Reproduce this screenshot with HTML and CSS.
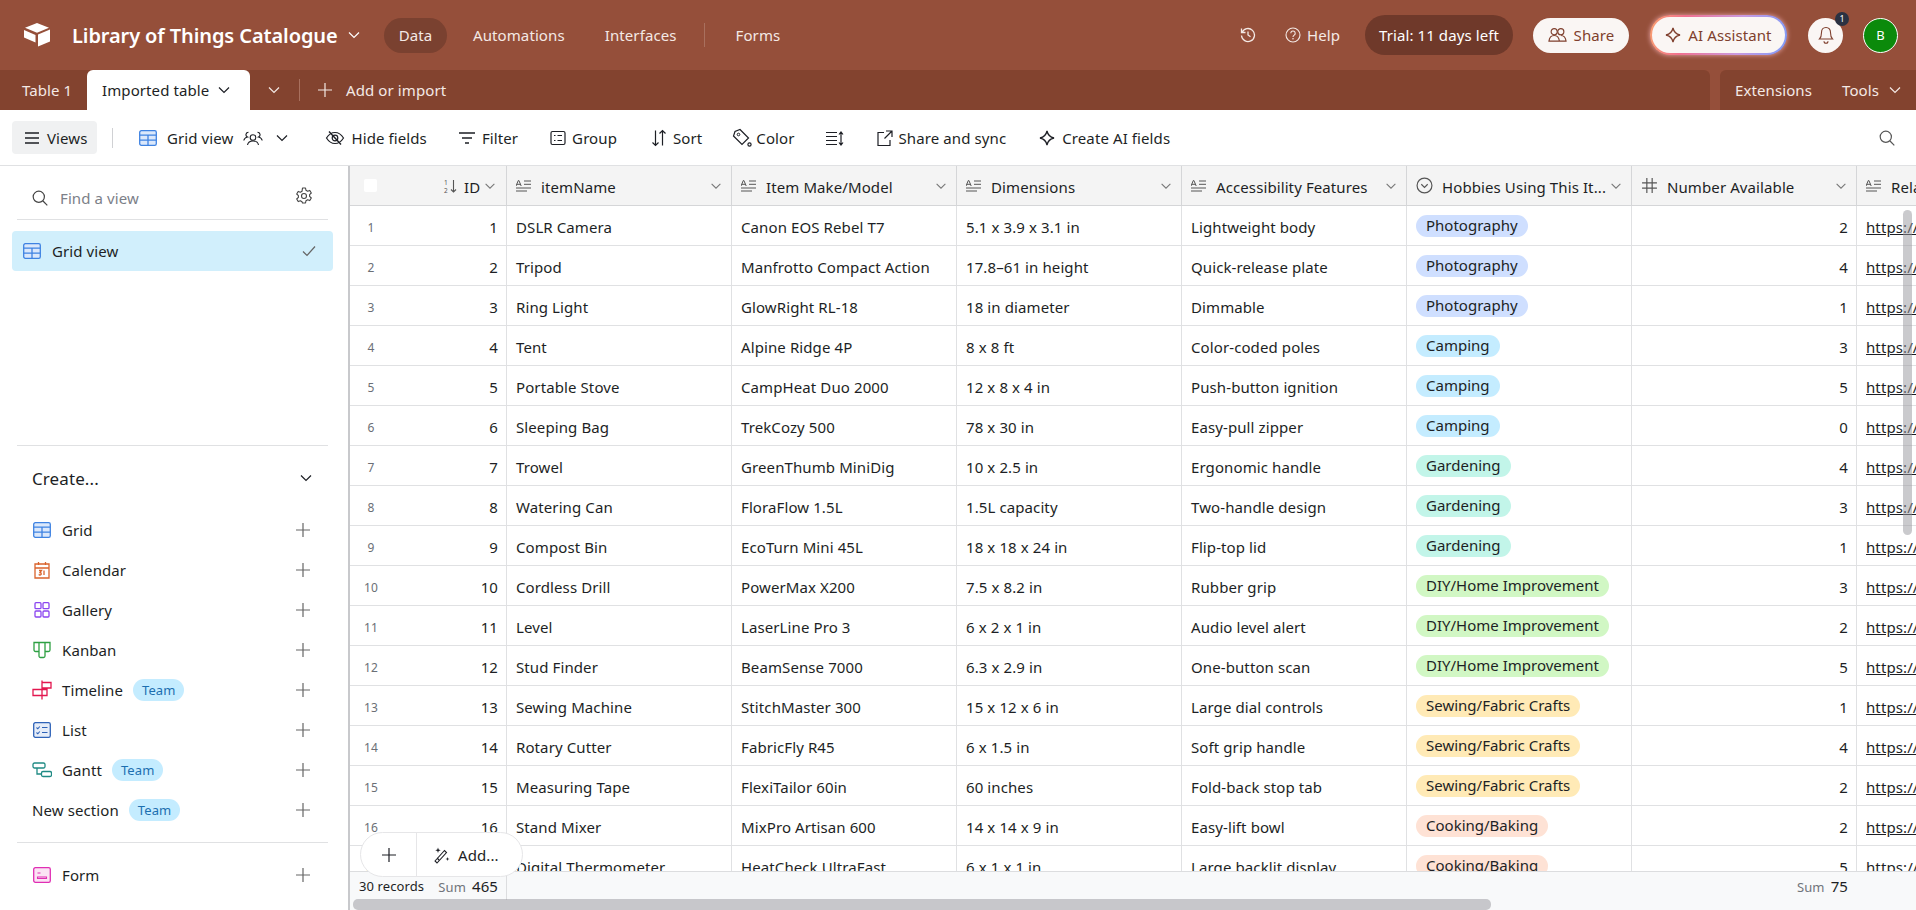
FILE: index.html
```html
<!DOCTYPE html>
<html lang="en">
<head>
  <meta charset="UTF-8">
  <title>Library of Things Catalogue</title>
  <link rel="stylesheet" href="styles.css">
</head>
<body>
  <svg class="sprite" xmlns="http://www.w3.org/2000/svg">
    <symbol id="chev" viewBox="0 0 16 16"><path d="M3 5.500l5 5 5-5" fill="none" stroke="currentColor" stroke-width="1.200"/></symbol>
    <symbol id="plus" viewBox="0 0 16 16"><path d="M8 1v14M1 8h14" fill="none" stroke="currentColor" stroke-width="1.200"/></symbol>
    <symbol id="grid" viewBox="0 0 18 16"><rect x=".7" y=".7" width="16.600" height="14.600" rx="1.600" fill="#dbe8fb" stroke="#3f83e2" stroke-width="1.300"/><path d="M.7 5.200h16.600M.7 10.200h16.600M9 5.200v10" stroke="#3f83e2" stroke-width="1.300" fill="none"/></symbol>
    <symbol id="text" viewBox="0 0 16 12"><path d="M0 6L2.300 .5h.6L5.200 6M.8 4.300h3.600M8 1h7M8 4.300h7M0 8h15M0 11h11" fill="none" stroke="currentColor" stroke-width="1"/></symbol>
    <symbol id="spark" viewBox="0 0 16 16"><path d="M8 1c.8 3.800 2.500 6 7 7-4.500 1-6.200 3.200-7 7-.8-3.800-2.500-6-7-7 4.500-1 6.200-3.200 7-7z" fill="none" stroke="currentColor" stroke-width="1.300"/></symbol>
    <symbol id="people" viewBox="0 0 20 16"><circle cx="6.500" cy="4.500" r="3.200" fill="none" stroke="currentColor" stroke-width="1.200"/><circle cx="13.500" cy="4.500" r="3.200" fill="none" stroke="currentColor" stroke-width="1.200"/><path d="M1 14.500c.4-3.500 2.300-6 5.500-6s5.100 2.500 5.500 6zM8 14.500h11c-.4-3.500-2.300-6-5.500-6" fill="none" stroke="currentColor" stroke-width="1.200"/></symbol>
    <symbol id="search" viewBox="0 0 16 16"><circle cx="6.800" cy="6.800" r="5.600" fill="none" stroke="currentColor" stroke-width="1.200"/><path d="M11 11l4.300 4.300" stroke="currentColor" stroke-width="1.200"/></symbol>
  </svg>

  <div class="app">
    <header class="topbar">
      <svg class="logo" viewBox="0 0 28 24"><path d="M14 0l12 4.800-12 4.900L2 4.800z" fill="#fff"/><path d="M15 11.500l12-5v12l-12 5z" fill="#fff"/><path d="M1 7l11.500 5v7.500L1 14.500z" fill="#fff"/></svg>
      <div class="base-name">Library of Things Catalogue</div>
      <svg class="ico chev-top"><use href="#chev"/></svg>
      <nav class="top-nav">
        <a class="nav-item active">Data</a>
        <a class="nav-item">Automations</a>
        <a class="nav-item">Interfaces</a>
        <span class="nav-sep"></span>
        <a class="nav-item">Forms</a>
      </nav>
      <div class="top-right">
        <svg class="ico history" viewBox="0 0 16 16"><path d="M1.500 1.500v4h4M2 5.500a6.500 6.500 0 1 1-.5 3M8 4.500V8l2.500 1.800" fill="none" stroke="currentColor" stroke-width="1.300"/></svg>
        <div class="help">
          <svg class="ico" viewBox="0 0 16 16"><circle cx="8" cy="8" r="7" fill="none" stroke="currentColor" stroke-width="1.100"/><path d="M5.800 6.200a2.200 2.200 0 1 1 3.400 1.900c-.8.500-1.200.9-1.200 1.800" fill="none" stroke="currentColor" stroke-width="1.100"/><circle cx="8" cy="11.800" r=".8" fill="currentColor"/></svg>
          <span>Help</span>
        </div>
        <div class="trial">Trial: 11 days left</div>
        <div class="share-btn"><svg class="ico"><use href="#people"/></svg>Share</div>
        <div class="ai-wrap"><div class="ai-btn"><svg class="ico"><use href="#spark"/></svg>AI Assistant</div></div>
        <div class="bell">
          <svg class="ico" viewBox="0 0 16 18"><path d="M8 1.500c-3 0-4.500 2.200-4.500 5 0 3.500-.5 5-2 6.500h13c-1.500-1.500-2-3-2-6.500 0-2.800-1.500-5-4.500-5zM6 15.200a2 2 0 0 0 4 0" fill="none" stroke="currentColor" stroke-width="1.100"/></svg>
          <span class="badge">1</span>
        </div>
        <div class="avatar">B</div>
      </div>
    </header>

    <div class="tabbar">
      <div class="tabs-left">
        <div class="tab first">Table 1</div>
        <div class="tab current">Imported table<svg class="ico"><use href="#chev"/></svg></div>
        <svg class="ico tabs-more"><use href="#chev"/></svg>
        <span class="tabs-sep"></span>
        <svg class="ico tabs-plus"><use href="#plus"/></svg>
        <div class="tab add">Add or import</div>
      </div>
      <div class="tabs-right">
        <div class="tab">Extensions</div>
        <div class="tab tools">Tools<svg class="ico"><use href="#chev"/></svg></div>
      </div>
    </div>

    <div class="toolbar">
      <div class="views-btn">
        <svg class="ico" viewBox="0 0 16 16"><path d="M1 3h14M1 8h14M1 13h14" stroke="currentColor" stroke-width="1.300"/></svg>Views
      </div>
      <span class="tool-sep"></span>
      <div class="tool grid-view">
        <svg class="ico grid-ico"><use href="#grid"/></svg>Grid view
        <svg class="ico people-ico" viewBox="0 0 20 15"><circle cx="10" cy="6.500" r="2.800" fill="none" stroke="currentColor" stroke-width="1.100"/><path d="M4.500 14c.5-2.600 2.500-4 5.500-4s5 1.400 5.500 4M5.500 1.200a2.500 2.500 0 0 0-1 4.800C2.500 6.500 1.200 7.700.8 9.500M14.500 1.200a2.500 2.500 0 0 1 1 4.800c2 .5 3.300 1.700 3.700 3.500" fill="none" stroke="currentColor" stroke-width="1.100"/></svg>
        <svg class="ico chev-ico"><use href="#chev"/></svg>
      </div>
      <div class="tool hide"><svg class="ico" viewBox="0 0 20 16"><path d="M1.500 8C4 4 6.500 2.500 10 2.500S16 4 18.500 8C16 12 13.500 13.500 10 13.500S4 12 1.500 8z" fill="none" stroke="currentColor" stroke-width="1.200"/><circle cx="10" cy="8" r="2.800" fill="none" stroke="currentColor" stroke-width="1.200"/><path d="M4 1.500l12 13" stroke="currentColor" stroke-width="1.400"/></svg>Hide fields</div>
      <div class="tool filter"><svg class="ico" viewBox="0 0 18 14"><path d="M1 2h16M4 7h10M7 12h4" stroke="currentColor" stroke-width="1.400"/></svg>Filter</div>
      <div class="tool group"><svg class="ico" viewBox="0 0 16 16"><rect x="1" y="1.500" width="14" height="13" rx="1.500" fill="none" stroke="currentColor" stroke-width="1.200"/><path d="M4 5.500h1.500M4 10.500h1.500M7.500 5.500H12M7.500 10.500H12" stroke="currentColor" stroke-width="1.200"/></svg>Group</div>
      <div class="tool sort"><svg class="ico" viewBox="0 0 16 18"><path d="M4.500 1.500v15M1.500 13.500l3 3 3-3M11.500 16.500v-15M8.500 4.500l3-3 3 3" fill="none" stroke="currentColor" stroke-width="1.200"/></svg>Sort</div>
      <div class="tool color"><svg class="ico" viewBox="0 0 20 20"><path d="M8 1.500l8.500 8.500-6.500 6.500L1.500 8 3 3.500z" fill="none" stroke="currentColor" stroke-width="1.200"/><circle cx="6.500" cy="6.500" r="1.300" fill="none" stroke="currentColor"/><circle cx="17.500" cy="16.500" r="1.600" fill="none" stroke="currentColor" stroke-width="1.200"/></svg>Color</div>
      <div class="tool rowh"><svg class="ico" viewBox="0 0 18 15"><path d="M0 1.500h11M0 5.500h11M0 9.500h11M0 13.500h11M15 1v13M13 3.500L15 1l2 2.500M13 11.500L15 14l2-2.500" fill="none" stroke="currentColor" stroke-width="1.200"/></svg></div>
      <div class="tool sharesync"><svg class="ico" viewBox="0 0 16 16"><path d="M7 2.500H1v13h12V10M9 1h6v6M15 1L7.500 8.500" fill="none" stroke="currentColor" stroke-width="1.200"/></svg>Share and sync</div>
      <div class="tool createai"><svg class="ico"><use href="#spark"/></svg>Create AI fields</div>
      <svg class="ico tool-search"><use href="#search"/></svg>
    </div>

    <div class="main">
      <aside class="sidebar">
        <div class="side-top">
          <div class="find">
            <svg class="ico"><use href="#search"/></svg>
            <span class="find-text">Find a view</span>
            <svg class="ico gear" viewBox="0 0 18 18"><path d="M7.500 1h3l.5 2.300 1.600.9 2.200-.8 1.500 2.600-1.700 1.600v1.800l1.700 1.600-1.500 2.600-2.200-.8-1.600.9-.5 2.300h-3L7 14.700l-1.600-.9-2.200.8-1.500-2.600 1.700-1.600V8.600L1.700 7l1.500-2.600 2.200.8L7 4.300z" fill="none" stroke="currentColor" stroke-width="1.100" stroke-linejoin="round"/><circle cx="9" cy="9" r="2.500" fill="none" stroke="currentColor" stroke-width="1.100"/></svg>
          </div>
          <div class="view-row">
            <svg class="ico grid-ico"><use href="#grid"/></svg>
            <span>Grid view</span>
            <svg class="ico check" viewBox="0 0 14 12"><path d="M1 6.500l4 4L13 1.500" fill="none" stroke="currentColor" stroke-width="1.200"/></svg>
          </div>
        </div>
        <div class="side-bottom">
          <div class="create-head"><span>Create...</span><svg class="ico"><use href="#chev"/></svg></div>
          <div class="create-item"><svg class="ico cr-ico"><use href="#grid"/></svg><span>Grid</span><svg class="ico add-ico"><use href="#plus"/></svg></div>
          <div class="create-item"><svg class="ico cr-ico" viewBox="0 0 18 18"><path d="M2 3h14v14H2zM2 7h14M5.500 1v3M12.500 1v3" fill="none" stroke="#d9632c" stroke-width="1.300"/><path d="M6 9.500h2.500L7 11.500c1.500 0 1.800 2.500 0 2.500-.7 0-1-.3-1.200-.6M11 9.500V14" fill="none" stroke="#d9632c" stroke-width="1.300"/></svg><span>Calendar</span><svg class="ico add-ico"><use href="#plus"/></svg></div>
          <div class="create-item"><svg class="ico cr-ico" viewBox="0 0 18 18"><rect x="2" y="1.700" width="6" height="6" rx="1" fill="none" stroke="#8b46f0" stroke-width="1.300"/><rect x="10" y="1.700" width="6" height="6" rx="1" fill="none" stroke="#8b46f0" stroke-width="1.300"/><rect x="2" y="10" width="6" height="6" rx="1" fill="none" stroke="#8b46f0" stroke-width="1.300"/><rect x="10" y="10" width="6" height="6" rx="1" fill="none" stroke="#8b46f0" stroke-width="1.300"/></svg><span>Gallery</span><svg class="ico add-ico"><use href="#plus"/></svg></div>
          <div class="create-item"><svg class="ico cr-ico" viewBox="0 0 18 18"><path d="M1 1.500h16V9a1.500 1.500 0 0 1-1.500 1.500H12V15a1.500 1.500 0 0 1-1.500 1.500h-3A1.500 1.500 0 0 1 6 15v-4.500H2.500A1.500 1.500 0 0 1 1 9zM6 1.500v9M12 1.500v9" fill="none" stroke="#2ea043" stroke-width="1.300"/></svg><span>Kanban</span><svg class="ico add-ico"><use href="#plus"/></svg></div>
          <div class="create-item"><svg class="ico cr-ico wide" viewBox="0 0 20 20"><path d="M10 .5v19M10 2.500h9v5.500h-9M1 9.500h14v6H1z" fill="none" stroke="#e3174f" stroke-width="1.300"/></svg><span>Timeline</span><span class="team">Team</span><svg class="ico add-ico"><use href="#plus"/></svg></div>
          <div class="create-item"><svg class="ico cr-ico" viewBox="0 0 18 16"><rect x=".7" y=".7" width="16.600" height="14.600" rx="1.600" fill="#e6edf8" stroke="#2f63b8" stroke-width="1.300"/><path d="M3.500 5.500l1.300 1.300 2-2.300M3.500 10.500l1.300 1.300 2-2.300M9 5.500h5.500M9 10.500h5.500" fill="none" stroke="#2f63b8" stroke-width="1.100"/></svg><span>List</span><svg class="ico add-ico"><use href="#plus"/></svg></div>
          <div class="create-item"><svg class="ico cr-ico wide" viewBox="0 0 20 16"><rect x="1" y="1" width="12" height="5" rx="1.500" fill="none" stroke="#1f8a84" stroke-width="1.300"/><rect x="9.500" y="9.500" width="10" height="5" rx="1.500" fill="none" stroke="#1f8a84" stroke-width="1.300"/><path d="M5 6v6h4.500" fill="none" stroke="#1f8a84" stroke-width="1.300"/></svg><span>Gantt</span><span class="team">Team</span><svg class="ico add-ico"><use href="#plus"/></svg></div>
          <div class="create-item section"><span>New section</span><span class="team">Team</span><svg class="ico add-ico"><use href="#plus"/></svg></div>
          <div class="create-item form"><svg class="ico cr-ico" viewBox="0 0 18 16"><rect x=".7" y=".7" width="16.600" height="14.600" rx="1.600" fill="#fbe3f4" stroke="#e02fb4" stroke-width="1.300"/><path d="M4.500 6h3M4.500 10h9v1.500h-9z" fill="none" stroke="#e02fb4" stroke-width="1.100"/></svg><span>Form</span><svg class="ico add-ico"><use href="#plus"/></svg></div>
        </div>
      </aside>

      <section class="grid-area">
        <div class="grid-head row">
          <div class="cell gutter">
            <span class="checkbox"></span>
            <svg class="ico sort-ico" viewBox="0 0 16 16"><path d="M11.500 2v12M9 11.500l2.500 2.500 2.500-2.500" fill="none" stroke="currentColor" stroke-width="1.100"/><text x="2" y="7" font-size="6.500" fill="currentColor" font-family="Noto Sans">1</text><text x="2" y="14.500" font-size="6.500" fill="currentColor" font-family="Noto Sans">2</text></svg>
            <span class="id-label">ID</span>
            <svg class="ico hchev"><use href="#chev"/></svg>
          </div>
          <div class="cell"><svg class="ico f-ico"><use href="#text"/></svg><span class="h-name">itemName</span><svg class="ico hchev"><use href="#chev"/></svg></div>
          <div class="cell"><svg class="ico f-ico"><use href="#text"/></svg><span class="h-name">Item Make/Model</span><svg class="ico hchev"><use href="#chev"/></svg></div>
          <div class="cell"><svg class="ico f-ico"><use href="#text"/></svg><span class="h-name">Dimensions</span><svg class="ico hchev"><use href="#chev"/></svg></div>
          <div class="cell"><svg class="ico f-ico"><use href="#text"/></svg><span class="h-name">Accessibility Features</span><svg class="ico hchev"><use href="#chev"/></svg></div>
          <div class="cell"><svg class="ico f-ico big" viewBox="0 0 16 16"><circle cx="8" cy="8" r="7" fill="none" stroke="currentColor" stroke-width="1.100"/><path d="M5 6.800l3 3 3-3" fill="none" stroke="currentColor" stroke-width="1.100"/></svg><span class="h-name">Hobbies Using This It...</span><svg class="ico hchev"><use href="#chev"/></svg></div>
          <div class="cell"><svg class="ico f-ico big" viewBox="0 0 16 16"><path d="M5.500 1v14M10.500 1v14M1 5.500h14M1 10.500h14" fill="none" stroke="currentColor" stroke-width="1.100"/></svg><span class="h-name">Number Available</span><svg class="ico hchev"><use href="#chev"/></svg></div>
          <div class="cell"><svg class="ico f-ico"><use href="#text"/></svg><span class="h-name">Related Link</span></div>
        </div>

        <div class="rows">
          <div class="row"><div class="cell gutter"><span class="num">1</span><span class="id">1</span></div><div class="cell">DSLR Camera</div><div class="cell">Canon EOS Rebel T7</div><div class="cell">5.1 x 3.9 x 3.1 in</div><div class="cell">Lightweight body</div><div class="cell"><span class="pill photo">Photography</span></div><div class="cell right">2</div><div class="cell link">https://example.com</div></div>
          <div class="row"><div class="cell gutter"><span class="num">2</span><span class="id">2</span></div><div class="cell">Tripod</div><div class="cell">Manfrotto Compact Action</div><div class="cell">17.8–61 in height</div><div class="cell">Quick-release plate</div><div class="cell"><span class="pill photo">Photography</span></div><div class="cell right">4</div><div class="cell link">https://example.com</div></div>
          <div class="row"><div class="cell gutter"><span class="num">3</span><span class="id">3</span></div><div class="cell">Ring Light</div><div class="cell">GlowRight RL-18</div><div class="cell">18 in diameter</div><div class="cell">Dimmable</div><div class="cell"><span class="pill photo">Photography</span></div><div class="cell right">1</div><div class="cell link">https://example.com</div></div>
          <div class="row"><div class="cell gutter"><span class="num">4</span><span class="id">4</span></div><div class="cell">Tent</div><div class="cell">Alpine Ridge 4P</div><div class="cell">8 x 8 ft</div><div class="cell">Color-coded poles</div><div class="cell"><span class="pill camp">Camping</span></div><div class="cell right">3</div><div class="cell link">https://example.com</div></div>
          <div class="row"><div class="cell gutter"><span class="num">5</span><span class="id">5</span></div><div class="cell">Portable Stove</div><div class="cell">CampHeat Duo 2000</div><div class="cell">12 x 8 x 4 in</div><div class="cell">Push-button ignition</div><div class="cell"><span class="pill camp">Camping</span></div><div class="cell right">5</div><div class="cell link">https://example.com</div></div>
          <div class="row"><div class="cell gutter"><span class="num">6</span><span class="id">6</span></div><div class="cell">Sleeping Bag</div><div class="cell">TrekCozy 500</div><div class="cell">78 x 30 in</div><div class="cell">Easy-pull zipper</div><div class="cell"><span class="pill camp">Camping</span></div><div class="cell right">0</div><div class="cell link">https://example.com</div></div>
          <div class="row"><div class="cell gutter"><span class="num">7</span><span class="id">7</span></div><div class="cell">Trowel</div><div class="cell">GreenThumb MiniDig</div><div class="cell">10 x 2.5 in</div><div class="cell">Ergonomic handle</div><div class="cell"><span class="pill garden">Gardening</span></div><div class="cell right">4</div><div class="cell link">https://example.com</div></div>
          <div class="row"><div class="cell gutter"><span class="num">8</span><span class="id">8</span></div><div class="cell">Watering Can</div><div class="cell">FloraFlow 1.5L</div><div class="cell">1.5L capacity</div><div class="cell">Two-handle design</div><div class="cell"><span class="pill garden">Gardening</span></div><div class="cell right">3</div><div class="cell link">https://example.com</div></div>
          <div class="row"><div class="cell gutter"><span class="num">9</span><span class="id">9</span></div><div class="cell">Compost Bin</div><div class="cell">EcoTurn Mini 45L</div><div class="cell">18 x 18 x 24 in</div><div class="cell">Flip-top lid</div><div class="cell"><span class="pill garden">Gardening</span></div><div class="cell right">1</div><div class="cell link">https://example.com</div></div>
          <div class="row"><div class="cell gutter"><span class="num">10</span><span class="id">10</span></div><div class="cell">Cordless Drill</div><div class="cell">PowerMax X200</div><div class="cell">7.5 x 8.2 in</div><div class="cell">Rubber grip</div><div class="cell"><span class="pill diy">DIY/Home Improvement</span></div><div class="cell right">3</div><div class="cell link">https://example.com</div></div>
          <div class="row"><div class="cell gutter"><span class="num">11</span><span class="id">11</span></div><div class="cell">Level</div><div class="cell">LaserLine Pro 3</div><div class="cell">6 x 2 x 1 in</div><div class="cell">Audio level alert</div><div class="cell"><span class="pill diy">DIY/Home Improvement</span></div><div class="cell right">2</div><div class="cell link">https://example.com</div></div>
          <div class="row"><div class="cell gutter"><span class="num">12</span><span class="id">12</span></div><div class="cell">Stud Finder</div><div class="cell">BeamSense 7000</div><div class="cell">6.3 x 2.9 in</div><div class="cell">One-button scan</div><div class="cell"><span class="pill diy">DIY/Home Improvement</span></div><div class="cell right">5</div><div class="cell link">https://example.com</div></div>
          <div class="row"><div class="cell gutter"><span class="num">13</span><span class="id">13</span></div><div class="cell">Sewing Machine</div><div class="cell">StitchMaster 300</div><div class="cell">15 x 12 x 6 in</div><div class="cell">Large dial controls</div><div class="cell"><span class="pill sew">Sewing/Fabric Crafts</span></div><div class="cell right">1</div><div class="cell link">https://example.com</div></div>
          <div class="row"><div class="cell gutter"><span class="num">14</span><span class="id">14</span></div><div class="cell">Rotary Cutter</div><div class="cell">FabricFly R45</div><div class="cell">6 x 1.5 in</div><div class="cell">Soft grip handle</div><div class="cell"><span class="pill sew">Sewing/Fabric Crafts</span></div><div class="cell right">4</div><div class="cell link">https://example.com</div></div>
          <div class="row"><div class="cell gutter"><span class="num">15</span><span class="id">15</span></div><div class="cell">Measuring Tape</div><div class="cell">FlexiTailor 60in</div><div class="cell">60 inches</div><div class="cell">Fold-back stop tab</div><div class="cell"><span class="pill sew">Sewing/Fabric Crafts</span></div><div class="cell right">2</div><div class="cell link">https://example.com</div></div>
          <div class="row"><div class="cell gutter"><span class="num">16</span><span class="id">16</span></div><div class="cell">Stand Mixer</div><div class="cell">MixPro Artisan 600</div><div class="cell">14 x 14 x 9 in</div><div class="cell">Easy-lift bowl</div><div class="cell"><span class="pill cook">Cooking/Baking</span></div><div class="cell right">2</div><div class="cell link">https://example.com</div></div>
          <div class="row"><div class="cell gutter"><span class="num">17</span><span class="id">17</span></div><div class="cell">Digital Thermometer</div><div class="cell">HeatCheck UltraFast</div><div class="cell">6 x 1 x 1 in</div><div class="cell">Large backlit display</div><div class="cell"><span class="pill cook">Cooking/Baking</span></div><div class="cell right">5</div><div class="cell link">https://example.com</div></div>
        </div>

        <div class="grid-foot">
          <div class="foot-left"><span>30 records</span><span class="sum"><em>Sum</em> 465</span></div>
          <div class="foot-right"><span class="sum"><em>Sum</em> 75</span></div>
        </div>

        <div class="add-pill">
          <div class="add-plus"><svg class="ico"><use href="#plus"/></svg></div>
          <div class="add-more">
            <svg class="ico" viewBox="0 0 18 18"><path d="M3 15L12.500 4.500l2 2L5 17zM5 12l2 2" fill="none" stroke="currentColor" stroke-width="1.100"/><path d="M6 1.500l.7 2 2 .7-2 .7-.7 2-.7-2-2-.7 2-.7zM15.500 11l.5 1.500 1.500.5-1.500.5-.5 1.500-.5-1.500-1.500-.5 1.500-.5z" fill="currentColor"/></svg>
            Add...
          </div>
        </div>
        <div class="thumb-v"></div>
        <div class="thumb-h"></div>
      </section>
    </div>
  </div>
</body>
</html>
```

FILE: styles.css
```css
* {
  box-sizing: border-box;
}
html, body {
  margin: 0;
  height: 100%;
  overflow: hidden;
}
body {
  font-family: "Noto Sans", "Open Sans", sans-serif;
  font-size: 15px;
  letter-spacing: 0.1px;
  color: #1d1f25;
}
.sprite {
  display: none;
}
.ico {
  display: block;
  flex: none;
  width: 16px;
  height: 16px;
}
.app {
  display: flex;
  flex-direction: column;
  height: 910px;
}

/* top bar */
.topbar {
  display: flex;
  align-items: center;
  height: 70px;
  padding-left: 23px;
  background-color: #954f3a;
  color: #fff;
}
.logo {
  width: 28px;
  height: 24px;
  flex: none;
}
.base-name {
  margin-left: 21px;
  width: 266px;
  font-size: 20px;
  font-weight: 600;
  letter-spacing: -0.1px;
  white-space: nowrap;
}
.chev-top {
  margin-left: 8px;
}
.top-nav {
  display: flex;
  align-items: center;
  margin-left: 22px;
}
.nav-item {
  margin-left: 40px;
  color: #f4e9e5;
}
.nav-item.active {
  width: 63px;
  height: 35px;
  margin-left: 0;
  margin-right: -14px;
  line-height: 35px;
  text-align: center;
  border-radius: 18px;
  background-color: #7a4130;
}
.nav-sep {
  width: 1px;
  height: 24px;
  margin: 0 -9px 0 27px;
  background-color: #a9705e;
}
.top-right {
  display: flex;
  align-items: center;
  margin-left: auto;
  padding-right: 18px;
}
.history {
  margin-right: 29px;
  color: #f4e9e5;
}
.help {
  display: flex;
  align-items: center;
  gap: 6px;
  margin-right: 25px;
  color: #f4e9e5;
}
.trial {
  width: 148px;
  height: 40px;
  line-height: 40px;
  text-align: center;
  border-radius: 20px;
  background-color: #6f392a;
}
.share-btn {
  display: flex;
  align-items: center;
  justify-content: center;
  gap: 7px;
  width: 96px;
  height: 35px;
  margin-left: 20px;
  border-radius: 18px;
  background-color: #faf6f4;
  color: #7f3f2d;
}
.share-btn .ico {
  width: 19px;
}
.ai-wrap {
  margin-left: 21px;
  padding: 2px;
  width: 137px;
  height: 40px;
  border-radius: 20px;
  background: linear-gradient(100deg, #f9a070, #f0708f 25%, #c99ae0 65%, #7f9bf8);
  box-shadow: 0 0 5px rgba(255, 190, 200, 0.8);
}
.ai-btn {
  display: flex;
  align-items: center;
  justify-content: center;
  gap: 7px;
  height: 36px;
  border-radius: 18px;
  background-color: #faf6f4;
  color: #7f3f2d;
}
.bell {
  display: flex;
  align-items: center;
  justify-content: center;
  position: relative;
  width: 35px;
  height: 35px;
  margin-left: 21px;
  border-radius: 50%;
  background-color: #faf6f4;
  color: #7f3f2d;
}
.bell .ico {
  height: 18px;
}
.badge {
  position: absolute;
  top: -6px;
  right: -6px;
  width: 14px;
  height: 14px;
  border-radius: 50%;
  background-color: #2b3242;
  color: #fff;
  font-size: 9px;
  line-height: 14px;
  text-align: center;
}
.avatar {
  width: 35px;
  height: 35px;
  margin-left: 20px;
  border: 1px solid #fff;
  border-radius: 50%;
  background-color: #0b8a0b;
  color: #fff;
  font-size: 13px;
  line-height: 33px;
  text-align: center;
}

/* tab bar */
.tabbar {
  display: flex;
  gap: 10px;
  height: 40px;
  background-color: #954f3a;
}
.tabs-left, .tabs-right {
  display: flex;
  align-items: center;
  background-color: #83432f;
  color: #f4e9e5;
}
.tabs-left {
  flex: 1;
  padding-left: 22px;
  border-top-right-radius: 6px;
}
.tabs-right {
  width: 196px;
  padding-left: 15px;
  border-top-left-radius: 6px;
}
.tab {
  white-space: nowrap;
}
.tab.first {
  width: 49px;
}
.tab.current {
  display: flex;
  align-items: center;
  gap: 7px;
  width: 163px;
  height: 40px;
  margin-left: 16px;
  padding-left: 15px;
  border-radius: 6px 6px 0 0;
  background-color: #fff;
  color: #1d1f25;
}
.tabs-more {
  margin-left: 16px;
}
.tabs-sep {
  width: 1px;
  height: 22px;
  margin: 0 17px;
  background-color: #a9705e;
}
.tabs-plus {
  margin-right: 13px;
}
.tools {
  display: flex;
  align-items: center;
  gap: 8px;
  margin-left: 30px;
}

/* toolbar */
.toolbar {
  display: flex;
  align-items: center;
  height: 56px;
  padding-left: 12px;
  border-bottom: 1px solid #e0e1e3;
  background-color: #fff;
}
.views-btn {
  display: flex;
  align-items: center;
  gap: 7px;
  width: 85px;
  height: 33px;
  padding-left: 12px;
  border-radius: 4px;
  background-color: #f0f1f2;
}
.tool-sep {
  width: 1px;
  height: 20px;
  margin: 0 26px 0 15px;
  background-color: #d0d1d4;
}
.tool {
  display: flex;
  align-items: center;
  gap: 6px;
  padding-top: 1px;
  white-space: nowrap;
}
.grid-ico {
  width: 18px;
}
.grid-view .grid-ico {
  margin-right: 4px;
}
.people-ico {
  width: 20px;
  height: 15px;
  margin-left: 4px;
}
.chev-ico {
  margin-left: 5px;
}
.hide { margin-left: 35px; }
.hide .ico { width: 20px; height: 16px; }
.filter { margin-left: 31px; }
.filter .ico { width: 18px; height: 14px; }
.group { margin-left: 32px; }
.sort { margin-left: 34px; }
.sort .ico { height: 18px; }
.color { margin-left: 30px; gap: 4px; }
.color .ico { width: 20px; height: 20px; }
.rowh { margin-left: 31px; }
.rowh .ico { width: 18px; height: 15px; }
.sharesync { margin-left: 33px; }
.createai { margin-left: 33px; gap: 7px; }
.tool-search {
  margin-left: auto;
  margin-right: 21px;
  color: #555;
}

/* sidebar */
.main {
  display: flex;
  flex: 1;
  min-height: 0;
}
.sidebar {
  display: flex;
  flex-direction: column;
  justify-content: space-between;
  flex: none;
  width: 350px;
  padding: 0 15px 15px 12px;
  border-right: 2px solid #c8c9cc;
}
.find {
  display: flex;
  align-items: center;
  height: 54px;
  margin: 0 5px;
  padding: 11px 15px 0 15px;
  border-bottom: 1px solid #e0e1e3;
  color: #444;
}
.find-text {
  margin-left: 12px;
  color: #7c8088;
}
.gear {
  width: 18px;
  height: 18px;
  margin-left: auto;
  margin-bottom: 5px;
}
.view-row {
  display: flex;
  align-items: center;
  height: 40px;
  margin-top: 11px;
  padding: 0 17px 0 11px;
  border-radius: 4px;
  background-color: #d1effc;
}
.view-row span {
  margin-left: 11px;
}
.check {
  margin-left: auto;
  width: 14px;
  height: 12px;
  color: #666;
}
.side-bottom {
  margin: 0 5px;
  border-top: 1px solid #e0e1e3;
}
.create-head {
  display: flex;
  align-items: center;
  justify-content: space-between;
  height: 64px;
  padding: 0 14px 0 15px;
  font-size: 17px;
}
.create-item {
  display: flex;
  align-items: center;
  height: 40px;
  padding: 0 17px 0 16px;
}
.cr-ico {
  width: 18px;
  height: 18px;
  margin-right: 11px;
}
.cr-ico.wide {
  width: 20px;
  height: 20px;
  margin-left: -1px;
  margin-right: 10px;
}
.add-ico {
  margin-left: auto;
  color: #666;
}
.team {
  height: 22px;
  margin-left: 10px;
  padding: 0 9px;
  border-radius: 11px;
  background-color: #c4ecff;
  color: #1c6fb0;
  font-size: 13px;
  line-height: 22px;
}
.section {
  padding-left: 15px;
}
.form {
  margin-top: 25px;
  position: relative;
}
.form::before {
  content: "";
  position: absolute;
  top: -13px;
  left: 0;
  right: 0;
  height: 1px;
  background-color: #e0e1e3;
}

/* grid */
.grid-area {
  display: flex;
  flex-direction: column;
  flex: 1;
  min-width: 0;
  position: relative;
  overflow: hidden;
}
.row {
  display: grid;
  grid-template-columns: 157px repeat(7, 225px);
  height: 40px;
  border-bottom: 1px solid #e0e1e3;
}
.cell {
  display: flex;
  align-items: center;
  padding: 3px 8px 0 9px;
  overflow: hidden;
  white-space: nowrap;
  border-right: 1px solid #e0e1e3;
}
.grid-head {
  flex: none;
  height: 40px;
  border-bottom: 1px solid #d5d6d8;
  background-color: #f4f4f4;
}
.grid-head .cell {
  padding-top: 0;
  border-right-color: #d5d6d8;
}
.h-name, .id-label {
  padding-top: 3px;
}
.checkbox {
  width: 13px;
  height: 13px;
  margin-left: 5px;
  border-radius: 2px;
  background-color: #fff;
}
.sort-ico {
  margin-left: 65px;
  color: #555;
}
.id-label {
  margin-left: 6px;
}
.hchev {
  margin-left: auto;
  width: 14px;
  height: 14px;
  color: #777;
}
.gutter .hchev {
  margin-left: 3px;
}
.f-ico {
  color: #555;
}
.f-ico.big {
  width: 17px;
  height: 17px;
}
.h-name {
  margin-left: 9px;
}
.rows {
  flex: 1;
  min-height: 0;
  overflow: hidden;
}
.num {
  width: 24px;
  font-size: 12px;
  color: #6b6f76;
  text-align: center;
}
.id {
  margin-left: auto;
}
.right {
  justify-content: flex-end;
}
.link {
  text-decoration: underline;
}
.pill {
  height: 22px;
  margin-top: -2px;
  padding: 0 10px;
  border-radius: 11px;
  letter-spacing: 0;
  line-height: 21px;
}
.photo { background-color: #cfdfff; }
.camp { background-color: #c4ecff; }
.garden { background-color: #c2f5e9; }
.diy { background-color: #d1f7c4; }
.sew { background-color: #ffeab6; }
.cook { background-color: #fee2d5; }

.grid-foot {
  display: flex;
  flex: none;
  height: 39px;
  padding-bottom: 10px;
  border-top: 1px solid #dcdddf;
  background-color: #f8f9fa;
}
.foot-left {
  display: flex;
  flex: none;
  align-items: center;
  justify-content: space-between;
  width: 157px;
  padding: 0 8px 0 9px;
  border-right: 1px solid #dcdddf;
  font-size: 13px;
}
.foot-right {
  display: flex;
  flex: none;
  align-items: center;
  justify-content: flex-end;
  width: 1350px;
  padding-right: 9px;
}
.sum {
  font-size: 15px;
}
.sum em {
  font-style: normal;
  font-size: 13px;
  color: #70747b;
  margin-right: 2px;
}
.add-pill {
  display: flex;
  position: absolute;
  left: 10px;
  top: 666px;
  width: 163px;
  height: 45px;
  border: 1px solid #e6e6e8;
  border-radius: 23px;
  background-color: #fff;
}
.add-plus {
  display: flex;
  align-items: center;
  justify-content: center;
  width: 56px;
  border-right: 1px solid #e6e6e8;
}
.add-more {
  display: flex;
  align-items: center;
  gap: 8px;
  padding-left: 15px;
}
.add-more .ico {
  width: 18px;
  height: 18px;
}
.thumb-v {
  position: absolute;
  top: 44px;
  left: 1553px;
  width: 9px;
  height: 325px;
  border-radius: 5px;
  background-color: rgba(150, 150, 155, 0.5);
}
.thumb-h {
  position: absolute;
  top: 733px;
  left: 3px;
  width: 1138px;
  height: 11px;
  border-radius: 5px;
  background-color: rgba(150, 150, 155, 0.5);
}
```
